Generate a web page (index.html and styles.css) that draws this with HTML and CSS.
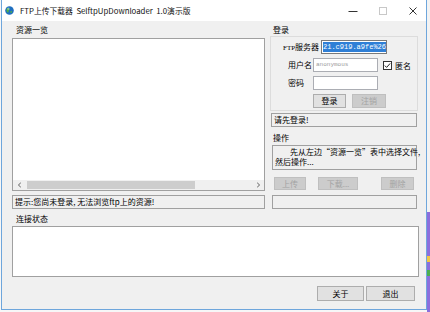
FILE: index.html
```html
<!DOCTYPE html>
<html lang="zh-CN">
<head>
<meta charset="utf-8">
<title>FTP上传下载器</title>
<link rel="stylesheet" href="styles.css">
</head>
<body>
<div class="window">
  <div class="titlebar">
    <svg class="appicon" width="9" height="9" viewBox="0 0 9 9">
      <circle cx="4.5" cy="4.5" r="4.3" fill="#1f6fc0"/>
      <path d="M2 2.2 C3 1.6 4.2 2 4.4 3 C4.6 4 3.4 4.3 3.6 5.4 C3.8 6.4 2.8 6.8 2.2 6.2 C1.4 5.2 1.2 3.2 2 2.2Z" fill="#4fb04a"/>
      <path d="M5.6 5 C6.4 4.8 7.4 5.3 7 6.3 C6.6 7.2 5.6 7.3 5.4 6.6Z" fill="#4fb04a"/>
      <circle cx="3.4" cy="2.8" r="1.2" fill="#ffffff" opacity="0.35"/>
    </svg>
    <span class="title">FTP上传下载器&nbsp; SelftpUpDownloader&nbsp; 1.0演示版</span>
    <div class="controls">
      <span class="ctl"><svg width="10" height="10" viewBox="0 0 10 10"><path d="M0.5 5.5H9.5" stroke="#333" stroke-width="1"/></svg></span>
      <span class="ctl"><svg width="10" height="10" viewBox="0 0 10 10"><rect x="1.5" y="1.5" width="7" height="7" fill="none" stroke="#c8c8c8" stroke-width="1"/></svg></span>
      <span class="ctl"><svg width="10" height="10" viewBox="0 0 10 10"><path d="M1.5 1.5L8.5 8.5M8.5 1.5L1.5 8.5" stroke="#333" stroke-width="1"/></svg></span>
    </div>
  </div>

  <div class="client">
    <div class="top">
      <div class="leftcol">
        <div class="label">资源一览</div>
        <div class="listbox">
          <div class="hscroll">
            <span class="arrow"><svg width="5" height="6" viewBox="0 0 5 6"><path d="M3.8 0.8L1.4 3L3.8 5.2" fill="none" stroke="#606060" stroke-width="1"/></svg></span>
            <span class="thumb"></span>
            <span class="arrow arrow-right"><svg width="5" height="6" viewBox="0 0 5 6"><path d="M1.2 0.8L3.6 3L1.2 5.2" fill="none" stroke="#606060" stroke-width="1"/></svg></span>
          </div>
        </div>
        <div class="static status">提示:您尚未登录, 无法浏览ftp上的资源!</div>
      </div>

      <div class="rightcol">
        <div class="label label-r">登录</div>
        <div class="group">
          <div class="row row-ftp">
            <span class="rlabel rlabel-ftp"><span class="ftp">FTP</span>服务器</span>
            <span class="input input-ftp"><span class="sel">21.c919.a9fe%26</span></span>
          </div>
          <div class="row row-indent">
            <span class="rlabel">用户名</span>
            <span class="input input-short"><span class="ph">anonymous</span></span>
            <span class="check">
              <svg width="9" height="9" viewBox="0 0 9 9"><rect x="0.5" y="0.5" width="8" height="8" fill="#fff" stroke="#333"/><path d="M1.8 4.6L3.6 6.4L7.2 2.4" fill="none" stroke="#222" stroke-width="1"/></svg>
              <span>匿名</span>
            </span>
          </div>
          <div class="row row-indent">
            <span class="rlabel">密码</span>
            <span class="input input-short"></span>
          </div>
          <div class="row row-buttons">
            <span class="btn btn-login">登录</span>
            <span class="btn btn-disabled btn-logout">注销</span>
          </div>
        </div>
        <div class="static msg">请先登录!</div>

        <div class="label label-r label-op">操作</div>
        <div class="static opbox">先从左边“资源一览”表中选择文件,<br>然后操作...</div>
        <div class="opbuttons">
          <span class="btn btn-disabled btn-up">上传</span>
          <span class="btn btn-disabled btn-down">下载...</span>
          <span class="btn btn-disabled btn-del">删除</span>
        </div>
        <div class="static empty"></div>
      </div>
    </div>

    <div class="label label-conn">连接状态</div>
    <div class="connbox"></div>

    <div class="footer">
      <span class="btn btn-about">关于</span>
      <span class="btn btn-exit">退出</span>
    </div>
  </div>
</div>
</body>
</html>
```

FILE: styles.css
```css
html, body {
  margin: 0;
  padding: 0;
}

body {
  width: 430px;
  height: 312px;
  overflow: hidden;
  background:
    linear-gradient(#f7f7f7, #f7f7f7) left top / 427px 100% no-repeat,
    linear-gradient(to bottom,
      #f3f3f3 0, #f3f3f3 212px,
      #8b6fdd 212px, #8b6fdd 256px,
      #f2c744 256px, #f2c744 262px,
      #8b6fdd 262px, #8b6fdd 270px,
      #4caf50 270px, #4caf50 276px,
      #8b6fdd 276px);
  font-family: "Noto Sans CJK SC", "Noto Sans", sans-serif;
  font-size: 8px;
  color: #000;
}

.window {
  margin-left: 1px;
  width: 424px;
  height: 309px;
  border: 1px solid #6ea6dc;
  border-top: none;
  background: #f0f0f0;
  display: flex;
  flex-direction: column;
}

.titlebar {
  height: 21px;
  flex: none;
  background: #fff;
  display: flex;
  align-items: center;
  padding-left: 3px;
}

.appicon {
  flex: none;
}

.title {
  margin-left: 6px;
  font-size: 7.8px;
  line-height: 10px;
  white-space: nowrap;
  color: #111;
}

.controls {
  margin-left: auto;
  display: flex;
  gap: 4px;
}

.ctl {
  width: 26px;
  height: 21px;
  display: flex;
  align-items: center;
  justify-content: center;
}

.client {
  flex: 1;
  padding: 4px 7px 0 10px;
  display: flex;
  flex-direction: column;
}

.top {
  display: flex;
  gap: 5px;
}

.leftcol {
  width: 253px;
  display: flex;
  flex-direction: column;
}

.rightcol {
  width: 148px;
  display: flex;
  flex-direction: column;
}

.label {
  height: 10px;
  line-height: 10px;
  padding-left: 4px;
  white-space: nowrap;
}

.label-r {
  padding-left: 3px;
}

.listbox {
  margin-top: 3px;
  height: 153px;
  box-sizing: border-box;
  border: 1px solid #a0a0a0;
  background: #fff;
  display: flex;
  flex-direction: column;
  justify-content: flex-end;
}

.hscroll {
  height: 10px;
  background: #f0f0f0;
  display: flex;
  align-items: center;
}

.arrow {
  width: 12px;
  height: 10px;
  display: flex;
  align-items: center;
  justify-content: center;
}

.arrow-right {
  margin-left: auto;
}

.thumb {
  margin-left: 2px;
  width: 168px;
  height: 8px;
  background: #cdcdcd;
}

.static {
  height: 14px;
  box-sizing: border-box;
  border: 1px solid #a0a0a0;
  line-height: 12px;
  padding-left: 2px;
  white-space: nowrap;
}

.status {
  margin-top: 4px;
}

.group {
  margin-top: 1px;
  border: 1px solid #dcdcdc;
  padding: 3px 0 2px;
  display: flex;
  flex-direction: column;
  gap: 4px;
}

.row {
  height: 14px;
  display: flex;
  align-items: center;
}

.row-ftp {
  padding-left: 12px;
}

.row-indent {
  padding-left: 17px;
}

.row-buttons {
  padding-left: 42px;
  gap: 6px;
}

.rlabel {
  width: 25px;
  line-height: 14px;
  white-space: nowrap;
}

.rlabel-ftp {
  width: 38px;
}

.ftp {
  font-family: "Liberation Serif", serif;
  font-size: 7px;
}

.input {
  height: 14px;
  box-sizing: border-box;
  border: 1px solid #abadb3;
  background: #fff;
  display: flex;
  align-items: center;
  overflow: hidden;
}

.input-ftp {
  width: 66px;
  border-color: #7a7a7a;
}

.input-short {
  width: 65px;
}

.sel {
  margin-left: 1px;
  background: #2f7fd6;
  color: #fff;
  font-family: "Liberation Mono", monospace;
  font-size: 7px;
  line-height: 10px;
  white-space: nowrap;
}

.ph {
  padding-left: 2px;
  color: #9a9a9a;
  font-family: "Liberation Mono", monospace;
  font-size: 6px;
  line-height: 10px;
}

.check {
  margin-left: 5px;
  display: flex;
  align-items: center;
  gap: 3px;
  white-space: nowrap;
}

.btn {
  height: 14px;
  box-sizing: border-box;
  border: 1px solid #adadad;
  background: #e1e1e1;
  display: flex;
  align-items: center;
  justify-content: center;
  line-height: 12px;
  white-space: nowrap;
}

.btn-disabled {
  background: #cccccc;
  border-color: #bfbfbf;
  color: #a3a3a3;
}

.btn-login {
  width: 33px;
}

.btn-logout {
  width: 34px;
}

.msg {
  margin: 2px 1px 0 1px;
}

.label-op {
  margin-top: 6px;
}

.opbox {
  margin: 2px 1px 0 2px;
  height: 25px;
  line-height: 10px;
  padding-top: 1px;
  text-indent: 15px;
}

.opbuttons {
  margin-top: 7px;
  display: flex;
}

.opbuttons .btn {
  height: 13px;
}

.btn-up {
  margin-left: 4px;
  width: 32px;
}

.btn-down {
  margin-left: 12px;
  width: 40px;
}

.btn-del {
  margin-left: 23px;
  width: 33px;
}

.empty {
  margin: 5px 1px 0 2px;
}

.label-conn {
  margin-top: 5px;
}

.connbox {
  margin-top: 2px;
  height: 51px;
  box-sizing: border-box;
  border: 1px solid #a0a0a0;
  background: #fff;
}

.footer {
  margin-top: 9px;
  padding-right: 4px;
  display: flex;
  justify-content: flex-end;
  gap: 2px;
}

.footer .btn {
  height: 15px;
}

.btn-about {
  width: 47px;
}

.btn-exit {
  width: 49px;
}
```
